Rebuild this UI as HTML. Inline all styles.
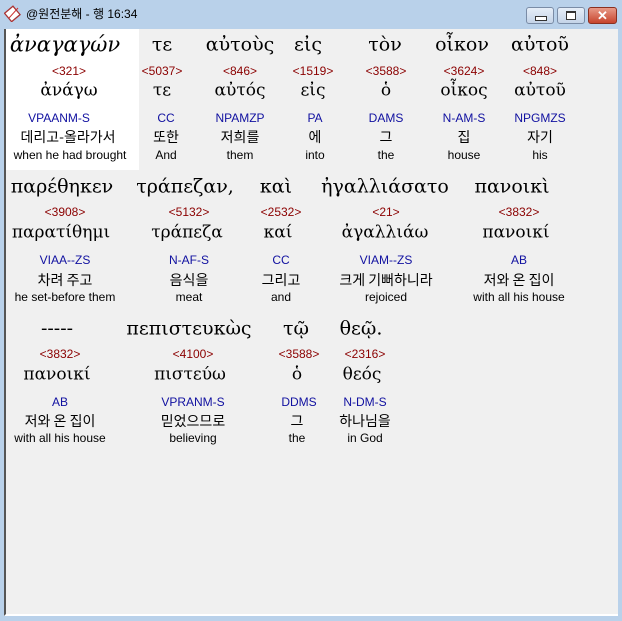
<!DOCTYPE html>
<html><head><meta charset="utf-8"><style>
body{margin:0;width:622px;height:621px;background:#b9d1ea;position:relative;overflow:hidden;font-family:"Liberation Sans","Noto Sans CJK KR",sans-serif}
.title{position:absolute;left:26px;top:5px;font-size:12px;color:#000}
.content{position:absolute;left:4px;top:29px;width:612px;height:585px;background:#f0f0f0;border-left:2px solid #555;border-bottom:2px solid #fff}
.white{position:absolute;left:6px;top:29px;width:133px;height:141px;background:#fff}
.t{position:absolute;transform:translate(-50%,-50%);white-space:nowrap;line-height:1}
.g{font-family:"DejaVu Serif","Liberation Serif",serif;font-size:19px;color:#000}
.n{font-size:12px;color:#8b0000}
.l{font-family:"DejaVu Serif","Liberation Serif",serif;font-size:17px}
.m{font-size:12px;color:#1010a0}
.k{font-size:14px;font-family:"Noto Sans CJK KR",sans-serif}
.e{font-size:12px}
.btn{position:absolute;top:7px;height:15px;border:1px solid #7a8ca6;border-radius:3px;background:linear-gradient(#e6eef8,#c4d4e8)}
</style></head><body>
<svg style="position:absolute;left:4px;top:4px" width="18" height="18"><rect x="3" y="4" width="11" height="11" transform="rotate(-40 9 10)" fill="#fff" stroke="#a33" stroke-width="1.3"/><line x1="5" y1="14" x2="14" y2="4" stroke="#c33"/></svg>
<div class="title">@원전분해 - 행 16:34</div>
<div class="btn" style="left:526px;width:26px"><div style="position:absolute;left:8px;top:8px;width:10px;height:3px;border:1px solid #333;background:#fff"></div></div>
<div class="btn" style="left:557px;width:26px"><div style="position:absolute;left:8px;top:3px;width:8px;height:6px;border:1px solid #333;border-top-width:2px;background:#fff"></div></div>
<div class="btn" style="left:588px;width:27px;background:linear-gradient(#e89a88,#c7442c);border-color:#8a3020;color:#fff;font-weight:bold;font-size:13px;text-align:center;line-height:15px">✕</div>
<div class="content"></div>
<div class="white"></div>

<div class="t g" style="left:65px;top:45px;font-size:21px;font-style:italic">ἀναγαγών</div>
<div class="t g" style="left:162px;top:45px">τε</div>
<div class="t g" style="left:240px;top:45px">αὐτοὺς</div>
<div class="t g" style="left:308px;top:45px">εἰς</div>
<div class="t g" style="left:385px;top:45px">τὸν</div>
<div class="t g" style="left:462px;top:45px">οἶκον</div>
<div class="t g" style="left:540px;top:45px">αὐτοῦ</div>
<div class="t n" style="left:69px;top:71px">&lt;321&gt;</div>
<div class="t n" style="left:162px;top:71px">&lt;5037&gt;</div>
<div class="t n" style="left:240px;top:71px">&lt;846&gt;</div>
<div class="t n" style="left:313px;top:71px">&lt;1519&gt;</div>
<div class="t n" style="left:386px;top:71px">&lt;3588&gt;</div>
<div class="t n" style="left:464px;top:71px">&lt;3624&gt;</div>
<div class="t n" style="left:540px;top:71px">&lt;848&gt;</div>
<div class="t l" style="left:69px;top:91px">ἀνάγω</div>
<div class="t l" style="left:162px;top:91px">τε</div>
<div class="t l" style="left:240px;top:91px">αὐτός</div>
<div class="t l" style="left:313px;top:91px">εἰς</div>
<div class="t l" style="left:386px;top:91px">ὁ</div>
<div class="t l" style="left:464px;top:91px">οἶκος</div>
<div class="t l" style="left:540px;top:91px">αὐτοῦ</div>
<div class="t m" style="left:59px;top:118px">VPAANM-S</div>
<div class="t m" style="left:166px;top:118px">CC</div>
<div class="t m" style="left:240px;top:118px">NPAMZP</div>
<div class="t m" style="left:315px;top:118px">PA</div>
<div class="t m" style="left:386px;top:118px">DAMS</div>
<div class="t m" style="left:464px;top:118px">N-AM-S</div>
<div class="t m" style="left:540px;top:118px">NPGMZS</div>
<div class="t k" style="left:68px;top:137px">데리고-올라가서</div>
<div class="t k" style="left:166px;top:137px">또한</div>
<div class="t k" style="left:240px;top:137px">저희를</div>
<div class="t k" style="left:315px;top:137px">에</div>
<div class="t k" style="left:386px;top:137px">그</div>
<div class="t k" style="left:464px;top:137px">집</div>
<div class="t k" style="left:540px;top:137px">자기</div>
<div class="t e" style="left:70px;top:155px">when he had brought</div>
<div class="t e" style="left:166px;top:155px">And</div>
<div class="t e" style="left:240px;top:155px">them</div>
<div class="t e" style="left:315px;top:155px">into</div>
<div class="t e" style="left:386px;top:155px">the</div>
<div class="t e" style="left:464px;top:155px">house</div>
<div class="t e" style="left:540px;top:155px">his</div>

<div class="t g" style="left:62px;top:187px">παρέθηκεν</div>
<div class="t g" style="left:185px;top:187px">τράπεζαν,</div>
<div class="t g" style="left:276px;top:187px">καὶ</div>
<div class="t g" style="left:385px;top:187px">ἠγαλλιάσατο</div>
<div class="t g" style="left:512px;top:187px">πανοικὶ</div>
<div class="t n" style="left:65px;top:212px">&lt;3908&gt;</div>
<div class="t n" style="left:189px;top:212px">&lt;5132&gt;</div>
<div class="t n" style="left:281px;top:212px">&lt;2532&gt;</div>
<div class="t n" style="left:386px;top:212px">&lt;21&gt;</div>
<div class="t n" style="left:519px;top:212px">&lt;3832&gt;</div>
<div class="t l" style="left:61px;top:233px">παρατίθημι</div>
<div class="t l" style="left:187px;top:233px">τράπεζα</div>
<div class="t l" style="left:278px;top:233px">καί</div>
<div class="t l" style="left:385px;top:233px">ἀγαλλιάω</div>
<div class="t l" style="left:516px;top:233px">πανοικί</div>
<div class="t m" style="left:65px;top:260px">VIAA--ZS</div>
<div class="t m" style="left:189px;top:260px">N-AF-S</div>
<div class="t m" style="left:281px;top:260px">CC</div>
<div class="t m" style="left:386px;top:260px">VIAM--ZS</div>
<div class="t m" style="left:519px;top:260px">AB</div>
<div class="t k" style="left:65px;top:280px">차려 주고</div>
<div class="t k" style="left:189px;top:280px">음식을</div>
<div class="t k" style="left:281px;top:280px">그리고</div>
<div class="t k" style="left:386px;top:280px">크게 기뻐하니라</div>
<div class="t k" style="left:519px;top:280px">저와 온 집이</div>
<div class="t e" style="left:65px;top:297px">he set-before them</div>
<div class="t e" style="left:189px;top:297px">meat</div>
<div class="t e" style="left:281px;top:297px">and</div>
<div class="t e" style="left:386px;top:297px">rejoiced</div>
<div class="t e" style="left:519px;top:297px">with all his house</div>

<div class="t g" style="left:57px;top:329px">-----</div>
<div class="t g" style="left:189px;top:329px">πεπιστευκὼς</div>
<div class="t g" style="left:296px;top:329px">τῷ</div>
<div class="t g" style="left:361px;top:329px">θεῷ.</div>
<div class="t n" style="left:60px;top:354px">&lt;3832&gt;</div>
<div class="t n" style="left:193px;top:354px">&lt;4100&gt;</div>
<div class="t n" style="left:299px;top:354px">&lt;3588&gt;</div>
<div class="t n" style="left:365px;top:354px">&lt;2316&gt;</div>
<div class="t l" style="left:57px;top:375px">πανοικί</div>
<div class="t l" style="left:190px;top:375px">πιστεύω</div>
<div class="t l" style="left:297px;top:375px">ὁ</div>
<div class="t l" style="left:362px;top:375px">θεός</div>
<div class="t m" style="left:60px;top:402px">AB</div>
<div class="t m" style="left:193px;top:402px">VPRANM-S</div>
<div class="t m" style="left:299px;top:402px">DDMS</div>
<div class="t m" style="left:365px;top:402px">N-DM-S</div>
<div class="t k" style="left:60px;top:421px">저와 온 집이</div>
<div class="t k" style="left:193px;top:421px">믿었으므로</div>
<div class="t k" style="left:297px;top:421px">그</div>
<div class="t k" style="left:365px;top:421px">하나님을</div>
<div class="t e" style="left:60px;top:438px">with all his house</div>
<div class="t e" style="left:193px;top:438px">believing</div>
<div class="t e" style="left:297px;top:438px">the</div>
<div class="t e" style="left:365px;top:438px">in God</div>
</body></html>
